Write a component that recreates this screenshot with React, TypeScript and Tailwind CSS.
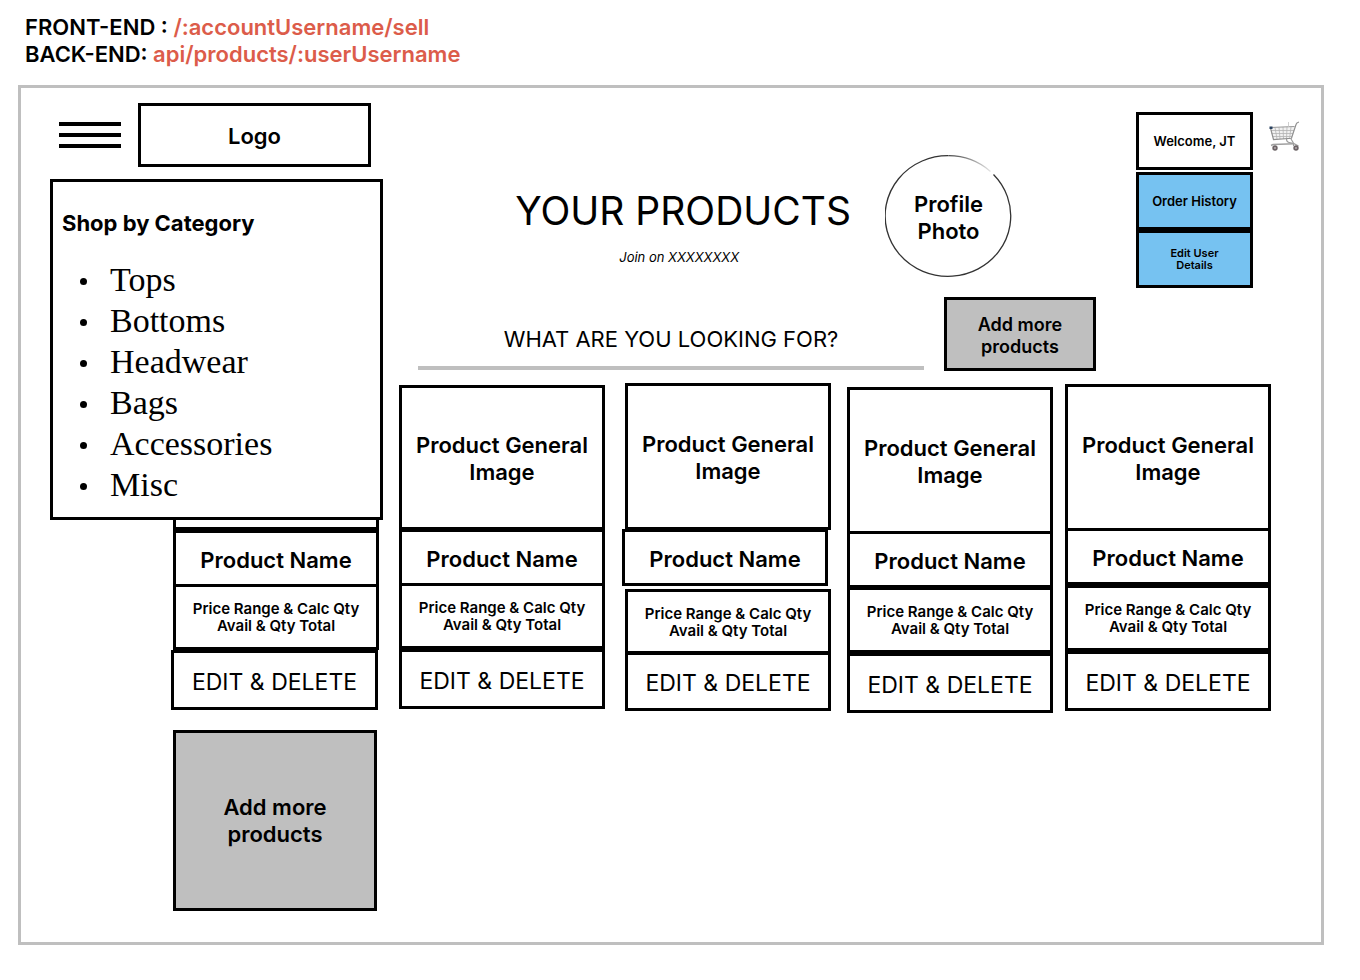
import React from "react";

const categories = ["Tops", "Bottoms", "Headwear", "Bags", "Accessories", "Misc"];

type Product = {
  id: number;
  card: string;
  image: string;
  name: string;
  price: string;
  edit: string;
  covered?: boolean;
};

const products: Product[] = [
  { id: 1, card: "mt-0", image: "h-[147px]", name: "mt-0", price: "-mt-[3px]", edit: "mr-px -ml-0.5", covered: true },
  { id: 2, card: "mt-0.5 ml-5", image: "h-[145px]", name: "-mt-px", price: "-mt-[3px]", edit: "mt-0" },
  { id: 3, card: "mt-0 ml-5", image: "h-[147px]", name: "-mt-px -ml-[3px] mr-[3px]", price: "mt-[3px]", edit: "-mt-1" },
  { id: 4, card: "mt-1 ml-4", image: "h-[147px]", name: "-mt-[3px]", price: "-mt-px", edit: "mt-0" },
  { id: 5, card: "mt-px ml-3", image: "h-[147px]", name: "-mt-[3px]", price: "mt-0", edit: "mt-0" },
];

function CartIcon() {
  return (
    <svg viewBox="0 0 31 31" className="h-[31px] w-[31px]" fill="none" aria-hidden="true">
      <path d="M1 6.500L26 5L22.500 17.500L4.500 18.500Z" fill="#f1f1f1" />
      <path
        d="M2 9.500H25M2.500 12.500H24M3.500 15.500H23M6 6.500L8 18M10 6.500L11 18M14 6L14.500 18M18 6L17.500 18M22 6L20.500 18"
        stroke="#b4b4b4"
        strokeWidth="0.8"
      />
      <path d="M1 6.500L25.500 5.500" stroke="#9a9a9a" strokeWidth="1" />
      <path d="M1.500 7L4.500 18.500L22.500 17.300L27 3.500Q27.600 1.500 30 1" stroke="#909090" strokeWidth="1.200" />
      <path d="M19.500 1V6" stroke="#c4c4c4" strokeWidth="0.800" />
      <path d="M17.500 18Q17.500 21 20 21.500L24.500 22.500V25M22 18L24.500 22" stroke="#999" strokeWidth="1.100" />
      <path d="M2 24.500L4 23.500L25 22.700L29.500 25" stroke="#a0a0a0" strokeWidth="1.400" />
      <rect x="0.500" y="5.500" width="3" height="2.500" fill="#28415f" />
      <circle cx="6" cy="27" r="2.700" fill="#6d6467" />
      <circle cx="6" cy="27" r="1" fill="#b5aeb0" />
      <circle cx="27" cy="27" r="2.700" fill="#6d6467" />
      <circle cx="27" cy="27" r="1" fill="#b5aeb0" />
    </svg>
  );
}

function ProfilePhoto() {
  return (
    <div className="relative flex h-[122px] w-[127px] shrink-0 items-center justify-center pt-[3px] text-center">
      <svg viewBox="0 0 127 122" className="absolute inset-0 h-full w-full" fill="none" aria-hidden="true">
        <defs>
          <linearGradient id="ring-fade" x1="63" y1="0" x2="107" y2="18" gradientUnits="userSpaceOnUse">
            <stop offset="0" stopColor="#444" />
            <stop offset="1" stopColor="#444" stopOpacity="0.1" />
          </linearGradient>
        </defs>
        <path d="M108.500 19.500A62.800 60.300 0 1 1 63.500 0.700" stroke="#333" strokeWidth="1.300" />
        <path d="M63.500 0.700A62.800 60.300 0 0 1 105.500 16.500" stroke="url(#ring-fade)" strokeWidth="1.300" />
      </svg>
      <span className="relative text-[22px] leading-[27px] font-semibold">
        Profile
        <br />
        Photo
      </span>
    </div>
  );
}

function ProductCard({ product }: { product: Product }) {
  return (
    <article className={`flex min-w-0 flex-1 flex-col text-center ${product.card}`}>
      <div className={`flex items-center justify-center border-3 border-black pt-[3px] text-[22px] leading-[27px] font-semibold ${product.image}`}>
        {!product.covered && (
          <>
            Product General
            <br />
            Image
          </>
        )}
      </div>
      <h3 className={`flex h-[57px] items-center justify-center border-3 border-black pt-[3px] text-[22px] leading-[27px] font-semibold ${product.name}`}>
        Product Name
      </h3>
      <p className={`flex h-[66px] items-center justify-center border-3 border-black text-[15px] leading-[17px] font-semibold ${product.price}`}>
        Price Range &amp; Calc Qty
        <br />
        Avail &amp; Qty Total
      </p>
      <button type="button" className={`h-[60px] border-3 border-black pt-[3px] text-[23px] leading-7 font-normal ${product.edit}`}>
        EDIT &amp; DELETE
      </button>
    </article>
  );
}

export default function App() {
  return (
    <div className="min-h-screen bg-white pt-3.5 pb-9 font-['Inter','Liberation_Sans',sans-serif] text-black">
      <div className="pl-[25px] text-[22px] leading-[27px] font-semibold">
        <p>
          FRONT-END : <span className="text-[#dc5c4a]">/:accountUsername/sell</span>
        </p>
        <p>
          BACK-END: <span className="text-[#dc5c4a]">api/products/:userUsername</span>
        </p>
      </div>

      <main className="relative mt-[17px] mr-9 ml-[18px] border-3 border-[#bfbfbf] pb-[31px]">
        <header className="flex items-start pt-[15px] pr-[21px] pl-[38px]">
          <div className="flex shrink-0 items-center gap-[17px]">
            <button type="button" aria-label="Menu" className="flex w-[62px] flex-col gap-[7px]">
              <span className="h-1 w-full bg-black" />
              <span className="h-1 w-full bg-black" />
              <span className="h-1 w-full bg-black" />
            </button>
            <a href="#home" className="flex h-16 w-[233px] items-center justify-center border-3 border-black pt-0.5 text-[22px] font-semibold">
              Logo
            </a>
          </div>

          <div className="ml-[47px] min-w-0 flex-1 pt-[52px]">
            <div className="flex items-start justify-end gap-[34px] pr-[84px]">
              <div className="pt-8 text-center">
                <h1 className="text-[39px] leading-12 font-normal whitespace-nowrap">YOUR PRODUCTS</h1>
                <p className="mt-3.5 pr-2 text-[13px] leading-4 italic">Join on XXXXXXXX</p>
              </div>
              <ProfilePhoto />
            </div>
            <div className="mt-5 flex items-end gap-5">
              <input
                type="text"
                aria-label="What are you looking for?"
                placeholder="WHAT ARE YOU LOOKING FOR?"
                className="mb-px h-[58px] min-w-0 flex-1 border-b-4 border-[#bfbfbf] text-center text-[22px] outline-none placeholder:text-black"
              />
              <button type="button" className="h-[74px] w-[152px] shrink-0 border-3 border-black bg-[#bfbfbf] pt-[3px] text-[18px] leading-[22px] font-semibold">
                Add more
                <br />
                products
              </button>
            </div>
          </div>

          <div className="ml-10 flex w-[117px] shrink-0 flex-col pt-[9px] text-[13px] font-semibold">
            <button type="button" className="h-[58px] border-3 border-black pt-0.5">
              Welcome, JT
            </button>
            <button type="button" className="mt-0.5 h-[58px] border-3 border-black bg-[#76c2f1] pt-0.5">
              Order History
            </button>
            <button type="button" className="h-[58px] border-3 border-black bg-[#76c2f1] text-[11px] leading-3">
              Edit User
              <br />
              Details
            </button>
          </div>
          <a href="#cart" aria-label="Cart" className="mt-[18px] ml-4 shrink-0">
            <CartIcon />
          </a>
        </header>

        <section className="mt-3 flex items-start pr-[50px] pl-[152px]">
          {products.map((product) => (
            <ProductCard key={product.id} product={product} />
          ))}
        </section>

        <div className="mt-[17px] pl-[152px]">
          <button type="button" className="h-[181px] w-[204px] border-3 border-black bg-[#bfbfbf] text-[22px] leading-[27px] font-semibold">
            Add more
            <br />
            products
          </button>
        </div>

        <nav className="absolute top-[91px] left-[29px] w-[333px] border-3 border-black bg-white pt-7 pb-3 pl-[9px]">
          <h2 className="text-[22px] leading-[27px] font-bold">Shop by Category</h2>
          <ul className="mt-[22px] pl-[18px] font-['Liberation_Serif',serif] text-[34px] leading-[41px]">
            {categories.map((category) => (
              <li key={category} className="flex items-center gap-[23px]">
                <span className="mt-1 h-[7px] w-[7px] rounded-full bg-black" />
                <a href={`#${category.toLowerCase()}`}>{category}</a>
              </li>
            ))}
          </ul>
        </nav>
      </main>
    </div>
  );
}
